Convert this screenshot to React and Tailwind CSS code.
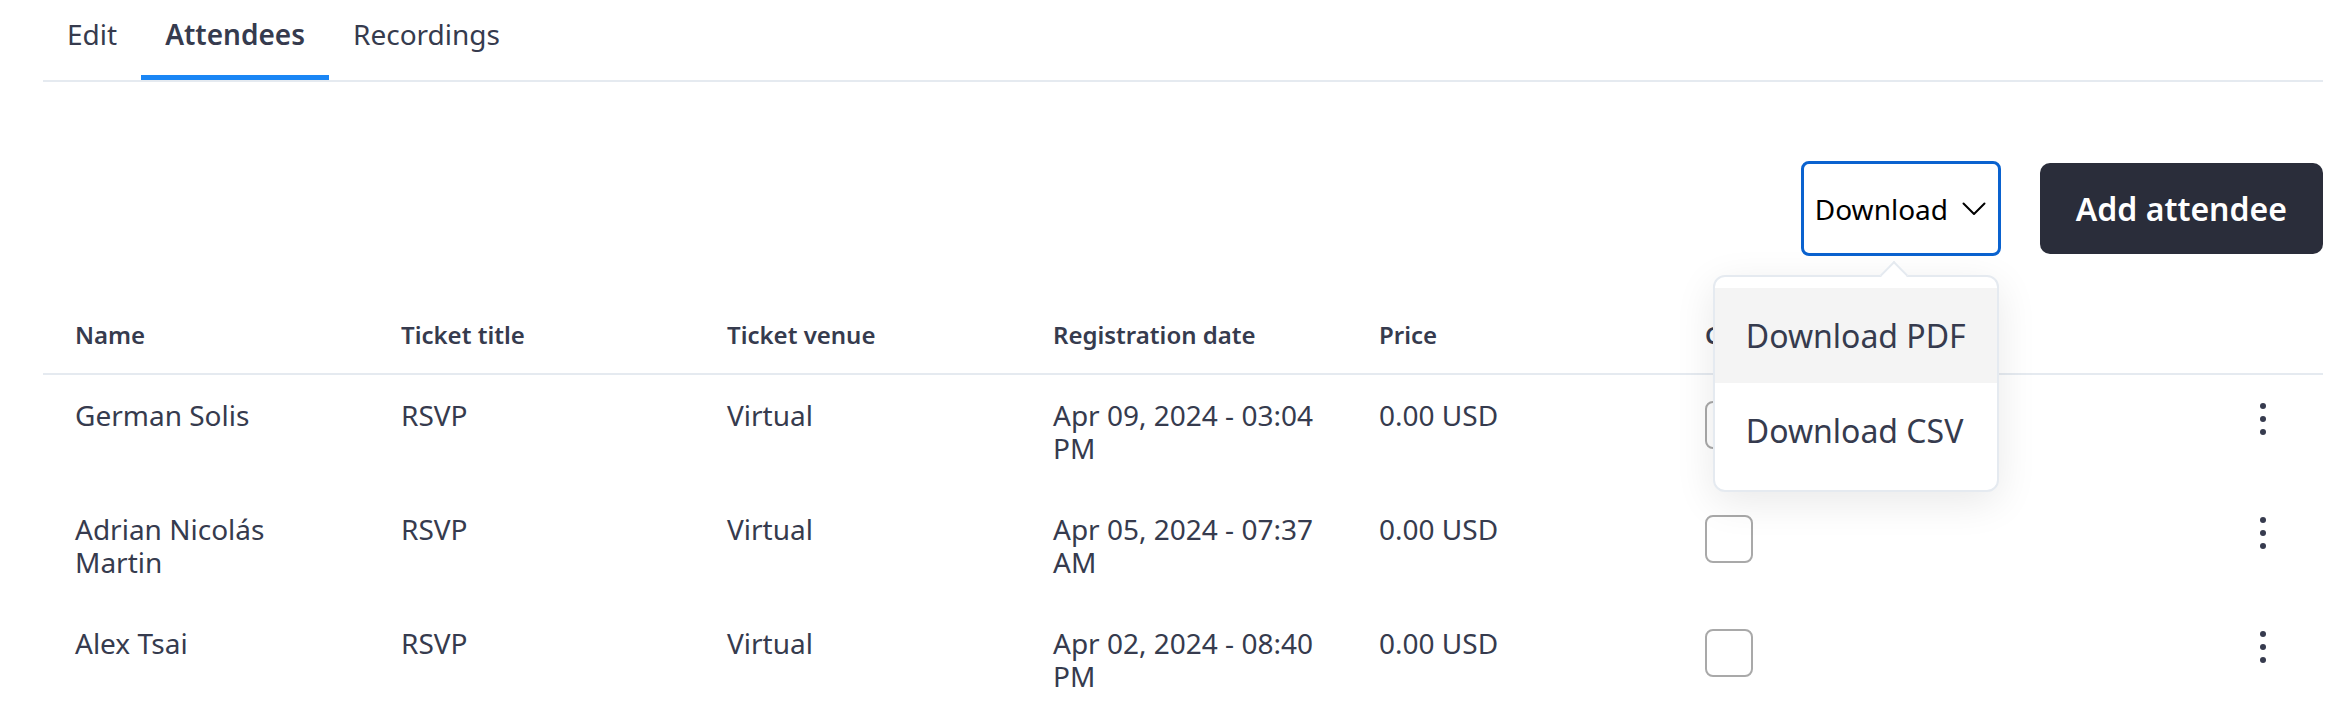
import React from 'react';

const rows = [
  { name: 'German Solis', ticket: 'RSVP', venue: 'Virtual', date: 'Apr 09, 2024 - 03:04 PM', price: '0.00 USD' },
  { name: 'Adrian Nicolás Martin', ticket: 'RSVP', venue: 'Virtual', date: 'Apr 05, 2024 - 07:37 AM', price: '0.00 USD' },
  { name: 'Alex Tsai', ticket: 'RSVP', venue: 'Virtual', date: 'Apr 02, 2024 - 08:40 PM', price: '0.00 USD' },
];

const headers = ['Name', 'Ticket title', 'Ticket venue', 'Registration date', 'Price', 'Checked in', ''];

function Tab({ label, active }) {
  return (
    <button
      className={`px-[24px] pt-[15px] pb-[22px] text-[28px] leading-[38px] border-b-[5px] ${
        active ? 'border-[#1a86f5] font-semibold' : 'border-transparent'
      }`}
    >
      {label}
    </button>
  );
}

function Kebab() {
  return (
    <svg width="8" height="32" viewBox="0 0 8 32" className="mt-[4px]">
      <circle cx="4" cy="3" r="3" fill="#363b4e" />
      <circle cx="4" cy="16" r="3" fill="#363b4e" />
      <circle cx="4" cy="29" r="3" fill="#363b4e" />
    </svg>
  );
}

const cell = 'py-[24px] pl-[32px] pr-[24px] text-[28px] leading-[33px]';

export default function App() {
  return (
    <div className="min-h-screen bg-white font-['Noto_Sans',sans-serif] text-[#363b4e]">
      <div className="ml-[43px] w-[2280px]">
        {/* tabs */}
        <nav className="flex border-b-2 border-[#e5eaf0]">
          <Tab label="Edit" />
          <Tab label="Attendees" active />
          <Tab label="Recordings" />
        </nav>

        {/* toolbar */}
        <div className="mt-[79px] flex items-center justify-end gap-[39px]">
          <div className="relative">
            <button className="flex h-[95px] w-[200px] items-center justify-between rounded-[8px] border-[3px] border-[#0a62cf] bg-white pl-[11px] pr-[12px] text-[28px] text-black">
              <span>Download</span>
              <svg width="24" height="14" viewBox="0 0 24 14" fill="none">
                <path d="M1.5 1.5 L12 12 L22.5 1.5" stroke="#000" strokeWidth="2" strokeLinecap="round" strokeLinejoin="round" />
              </svg>
            </button>

            {/* dropdown */}
            <div className="absolute left-[-88px] top-[114px] z-10 w-[286px] rounded-[12px] border-2 border-[#e5eaf0] bg-white pt-[11px] pb-[12px] shadow-[0_10px_40px_rgba(0,0,0,0.09)]">
              <div className="absolute left-[169px] top-[-12px] h-[20px] w-[20px] rotate-45 border-l-2 border-t-2 border-[#e5eaf0] bg-white" />
              <div className="relative flex h-[95px] items-center bg-[#f4f4f4] pl-[31px] text-[32px]">Download PDF</div>
              <div className="flex h-[95px] items-center pl-[31px] text-[32px]">Download CSV</div>
            </div>
          </div>

          <button className="h-[91px] rounded-[10px] bg-[#2a2d3a] px-[36px] text-[32px] font-semibold text-white">
            Add attendee
          </button>
        </div>

        {/* table */}
        <div className="mt-[40px] grid grid-cols-[326px_326px_326px_326px_326px_326px_1fr]">
          {headers.map((h, i) => (
            <div
              key={i}
              className="border-b-2 border-[#e5eaf0] py-[24px] pl-[32px] pr-[16px] text-[24px] font-semibold leading-[29px]"
            >
              {h}
            </div>
          ))}

          {rows.map((r) => (
            <React.Fragment key={r.name}>
              <div className={cell}>{r.name}</div>
              <div className={cell}>{r.ticket}</div>
              <div className={cell}>{r.venue}</div>
              <div className={cell}>{r.date}</div>
              <div className={cell}>{r.price}</div>
              <div className="py-[24px] pl-[32px]">
                <div className="mt-[2px] h-[48px] w-[48px] rounded-[8px] border-2 border-[#a9a9a9] bg-white" />
              </div>
              <div className="flex justify-end py-[24px] pr-[56px]">
                <Kebab />
              </div>
            </React.Fragment>
          ))}
        </div>
      </div>
    </div>
  );
}
